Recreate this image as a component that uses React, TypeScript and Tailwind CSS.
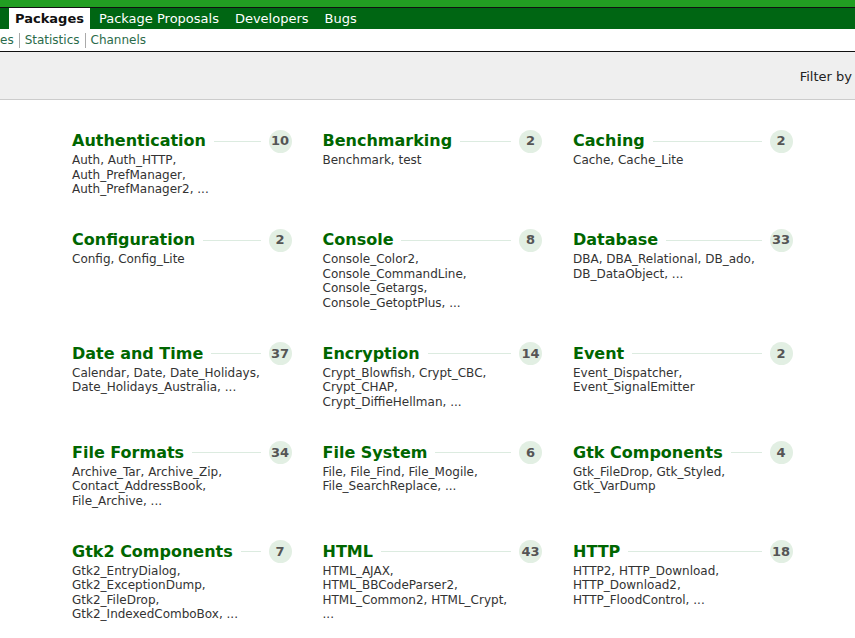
import React from 'react'

type Category = {
    name: string
    count: number
    packages: string[]
}

const categories: Category[] = [
    { name: 'Authentication', count: 10, packages: ['Auth, Auth_HTTP,', 'Auth_PrefManager,', 'Auth_PrefManager2, ...'] },
    { name: 'Benchmarking', count: 2, packages: ['Benchmark, test'] },
    { name: 'Caching', count: 2, packages: ['Cache, Cache_Lite'] },
    { name: 'Configuration', count: 2, packages: ['Config, Config_Lite'] },
    {
        name: 'Console',
        count: 8,
        packages: ['Console_Color2,', 'Console_CommandLine,', 'Console_Getargs,', 'Console_GetoptPlus, ...']
    },
    { name: 'Database', count: 33, packages: ['DBA, DBA_Relational, DB_ado,', 'DB_DataObject, ...'] },
    { name: 'Date and Time', count: 37, packages: ['Calendar, Date, Date_Holidays,', 'Date_Holidays_Australia, ...'] },
    { name: 'Encryption', count: 14, packages: ['Crypt_Blowfish, Crypt_CBC,', 'Crypt_CHAP,', 'Crypt_DiffieHellman, ...'] },
    { name: 'Event', count: 2, packages: ['Event_Dispatcher,', 'Event_SignalEmitter'] },
    { name: 'File Formats', count: 34, packages: ['Archive_Tar, Archive_Zip,', 'Contact_AddressBook,', 'File_Archive, ...'] },
    { name: 'File System', count: 6, packages: ['File, File_Find, File_Mogile,', 'File_SearchReplace, ...'] },
    { name: 'Gtk Components', count: 4, packages: ['Gtk_FileDrop, Gtk_Styled,', 'Gtk_VarDump'] },
    {
        name: 'Gtk2 Components',
        count: 7,
        packages: ['Gtk2_EntryDialog,', 'Gtk2_ExceptionDump,', 'Gtk2_FileDrop,', 'Gtk2_IndexedComboBox, ...']
    },
    { name: 'HTML', count: 43, packages: ['HTML_AJAX,', 'HTML_BBCodeParser2,', 'HTML_Common2, HTML_Crypt,', '...'] },
    { name: 'HTTP', count: 18, packages: ['HTTP2, HTTP_Download,', 'HTTP_Download2,', 'HTTP_FloodControl, ...'] }
]

const tabs = ['Package Proposals', 'Developers', 'Bugs']

const CategoryCard = ({ cat }: { cat: Category }) => (
    <div className="flex flex-col">
        <div className="flex items-center h-[22px]">
            <a href="#" className="text-[16px] font-bold text-[#006600] leading-[22px] whitespace-nowrap">
                {cat.name}
            </a>
            <div className="flex-1 h-px bg-[#dcebe0] mx-2" />
            <span className="flex items-center justify-center w-[23px] h-[23px] rounded-full bg-[#e2efe3] text-[13px] font-bold text-[#555555]">
                {cat.count}
            </span>
        </div>
        {/* package list */}
        <div className="mt-px text-[12px] leading-[14.5px] text-[#333333]">
            {cat.packages.map((line) => (
                <div key={line} className="whitespace-nowrap">
                    {line}
                </div>
            ))}
        </div>
    </div>
)

const App = () => {
    return (
        <div
            className="w-[855px] h-[638px] overflow-hidden bg-white"
            style={{ fontFamily: '"DejaVu Sans", Verdana, sans-serif' }}
        >
            {/* top bar */}
            <div className="h-[7px] bg-[#229e22]" />
            <div className="h-px bg-[#111111]" />
            <div className="flex items-stretch h-[21px] bg-[#006613] pl-[9px] gap-[2px]">
                <span className="flex items-center px-[6px] bg-white text-[13px] font-bold text-[#111111]">Packages</span>
                {tabs.map((tab) => (
                    <a key={tab} href="#" className="flex items-center px-[7px] text-[13px] text-white">
                        {tab}
                    </a>
                ))}
            </div>

            {/* sub nav */}
            <div className="flex items-center h-[22px] text-[12px] text-[#2b6b4a]">
                <a href="#" className="pr-[5px]">es</a>
                <a href="#" className="px-[5px] border-l border-[#aaaaaa] leading-[15px]">Statistics</a>
                <a href="#" className="px-[5px] border-l border-[#aaaaaa] leading-[15px]">Channels</a>
            </div>

            {/* filter band */}
            <div className="h-px bg-[#111111]" />
            <div className="flex items-center justify-end h-[48px] bg-[#efefef] border-b border-[#cccccc] pr-[3px] pt-[2px]">
                <span className="text-[13px] text-[#222222] whitespace-nowrap">Filter by</span>
            </div>

            {/* categories */}
            <div className="grid grid-cols-[repeat(3,219.5px)] gap-x-[31px] gap-y-[32.5px] pl-[72px] pt-[30px]">
                {categories.map((cat) => (
                    <CategoryCard key={cat.name} cat={cat} />
                ))}
            </div>
        </div>
    )
}

export default App
